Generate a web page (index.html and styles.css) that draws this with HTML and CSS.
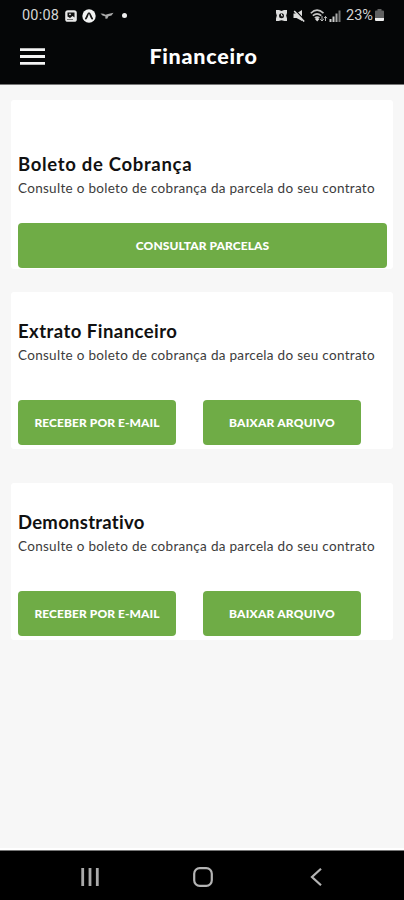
FILE: index.html
```html
<!DOCTYPE html>
<html lang="pt-BR">
<head>
<meta charset="utf-8">
<meta name="viewport" content="width=device-width, initial-scale=1">
<title>Financeiro</title>
<link rel="stylesheet" href="styles.css">
</head>
<body>
<div class="app">
  <header class="top">
    <div class="status">
      <div class="status-left">
        <span class="clock">00:08</span>
        <svg class="ico-image" width="12" height="12" viewBox="0 0 12 12"><rect x=".2" y=".2" width="11.6" height="11.6" rx="2.6" fill="#e8e8e8"/><path d="M2.500 2.500h7v5L7.500 6 5 8 2.500 6.500z" fill="#111"/><path d="M2 9.500h6" stroke="#555" stroke-width=".8"/><circle cx="5" cy="4.300" r=".9" fill="#eee"/></svg>
        <svg class="ico-app" width="14" height="14" viewBox="0 0 14 14"><circle cx="7" cy="7" r="6.700" fill="#f2f2f2"/><path d="M3.800 9.700C5.200 8.200 5.800 4 7 4s1.800 4.200 3.200 5.700" fill="none" stroke="#151515" stroke-width="1.700" stroke-linecap="round"/></svg>
        <svg class="ico-bird" width="14" height="8" viewBox="0 0 14 8"><path d="M.5 1.500l3 .3 2 1 2.500-.8 5.500-1.200-2 2.700-3 .8-1.300 2.500-2-.2.300-2L2.500 3.500z" fill="#aaa"/></svg>
        <span class="dot"></span>
      </div>
      <div class="status-right">
        <svg class="ico-alarm" width="11" height="13" viewBox="0 0 11 13"><path d="M0 1h3l2.500 1L8 1h3v3l-.8 2.500.8 3V12H8.500l-3-.7-3 .7H0V9.500l.8-3L0 4z" fill="#ddd"/><circle cx="5.500" cy="6.700" r="2.500" fill="#151515"/><path d="M5.500 4.800v2h1.400" fill="none" stroke="#ddd"/></svg>
        <svg class="ico-mute" width="12" height="12" viewBox="0 0 12 12"><path d="M.5 3.500h3L9 0v11L3.500 8h-3z" fill="#ddd"/><path d="M2 0l9.500 10" stroke="#050607" stroke-width="1.200"/><path d="M1.200 1l10 10.500" stroke="#ddd" stroke-width="1.600"/></svg>
        <svg class="ico-wifi" width="18" height="14" viewBox="0 0 18 14"><g fill="none" stroke="#c5c5c5" stroke-width="1.600"><path d="M.8 4.200Q7 -1.800 13.500 4.200M2.800 6.700q4.200-3.800 8.500 0M4.800 9q2.300-1.900 4.600 0"/></g><path d="M5 10l2.100-1.200L9.500 10l-2.300 2.400z" fill="#ddd"/><path d="M12 7v5m-1.800-1.800L12 12l1.700-1.800M15.500 12V7.500m-1.500 1.700l1.500-1.700L17 9.200" fill="none" stroke="#bbb"/></svg>
        <svg class="ico-signal" width="12" height="12" viewBox="0 0 12 12"><path d="M.5 9h2v3h-2zM3.500 6.500h2V12h-2z" fill="#ccc"/><path d="M6.500 3.500h2V12h-2z" fill="#aaa"/><path d="M9.500.5h2V12h-2z" fill="#777"/></svg>
        <span class="percent">23%</span>
        <svg class="ico-battery" width="9" height="13" viewBox="0 0 9 13"><path d="M2.500 0h4v1.500H8q1 0 1 1V9H0V2.500q0-1 1-1h1.500z" fill="#606060"/><path d="M0 9h9v2q0 1-1 1H1q-1 0-1-1z" fill="#eee"/></svg>
      </div>
    </div>
    <div class="bar">
      <svg class="menu" width="25" height="17" viewBox="0 0 25 17"><path d="M0 1.700h25M0 8.500h25M0 15.300h25" stroke="#f4f4f4" stroke-width="2.800"/></svg>
      <h1>Financeiro</h1>
    </div>
  </header>
  <main>
    <section class="card card-first">
      <h2>Boleto de Cobrança</h2>
      <p>Consulte o boleto de cobrança da parcela do seu contrato</p>
      <div class="actions"><button class="wide">CONSULTAR PARCELAS</button></div>
    </section>
    <section class="card card-mid">
      <h2 class="h-extrato">Extrato Financeiro</h2>
      <p>Consulte o boleto de cobrança da parcela do seu contrato</p>
      <div class="actions"><button>RECEBER POR E-MAIL</button><button class="baixar">BAIXAR ARQUIVO</button></div>
    </section>
    <section class="card card-last">
      <h2 class="h-demo">Demonstrativo</h2>
      <p>Consulte o boleto de cobrança da parcela do seu contrato</p>
      <div class="actions"><button>RECEBER POR E-MAIL</button><button class="baixar">BAIXAR ARQUIVO</button></div>
    </section>
  </main>
  <nav>
    <svg width="18" height="18" viewBox="0 0 18 18"><path d="M1.700 0v18M9 0v18M16.300 0v18" stroke="#aaa" stroke-width="2.800"/></svg>
    <svg class="home" width="20" height="20" viewBox="0 0 20 20"><rect x="1.200" y="1.200" width="17.600" height="17.600" rx="5.500" fill="none" stroke="#b4b4b4" stroke-width="2.200"/></svg>
    <svg width="12" height="18" viewBox="0 0 12 18"><path d="M11 .8L2 9l9 8.200" fill="none" stroke="#b4b4b4" stroke-width="2.200"/></svg>
  </nav>
</div>
</body>
</html>
```
FILE: styles.css
```css
* { box-sizing: border-box; }
body { margin: 0; font-family: Lato, "Open Sans", sans-serif; background: #f7f7f7; }
.app { width: 404px; height: 900px; display: flex; flex-direction: column; overflow: hidden; }
h1, h2, p { margin: 0; white-space: nowrap; font-variant-ligatures: none; }
svg { display: block; flex: none; }

.top { height: 85px; flex: none; background: #050607; color: #fff; border-bottom: 1px solid #777; }
.status { height: 31px; padding: 0 20px 0 22px; display: flex; justify-content: space-between; align-items: center; font-family: Roboto, sans-serif; font-size: 14.5px; color: #d4d4d4; }
.status-left, .status-right { display: flex; align-items: center; }
.clock { width: 43px; letter-spacing: .2px; }
.ico-app { margin-left: 5px; }
.ico-bird { margin-left: 4px; }
.dot { width: 5px; height: 5px; border-radius: 50%; background: #eee; margin-left: 8px; }
.ico-mute { margin-left: 6px; }
.ico-wifi { margin-left: 5px; }
.ico-signal { margin-left: 1px; }
.percent { width: 28px; margin: 0 1px 0 5px; }
.bar { height: 50px; padding-left: 20px; display: grid; grid-template-columns: 25px 1fr 45px; align-items: center; }
h1 { text-align: center; font-size: 21.5px; line-height: 28px; font-weight: 900; letter-spacing: .75px; padding-left: 3px; }

main { flex: 1; padding: 15px 11px 0; }
.card { height: 157px; background: #fff; border-radius: 3px; padding: 28px 6px 0 7px; }
.card-first { height: 169px; padding-top: 53px; margin-bottom: 23px; }
.card-mid { margin-bottom: 34px; }
h2 { font-size: 18.5px; line-height: 22px; font-weight: 700; letter-spacing: .68px; color: #111; }
.h-extrato { letter-spacing: .46px; }
.h-demo { letter-spacing: .27px; }
p { font-size: 13.5px; line-height: 18px; margin-top: 4px; letter-spacing: .3px; color: #3c3c3c; }
.actions { display: flex; gap: 27px; margin-top: 36px; }
.card-first .actions { margin-top: 26px; }
button { width: 158px; height: 45px; padding: 0; border: 0; border-radius: 4px; background: #6fac46; color: #fff; font: 900 12px/20px Lato, sans-serif; letter-spacing: .07px; white-space: nowrap; }
.baixar { letter-spacing: .22px; }
.wide { width: 370px; }

nav { height: 50px; flex: none; background: #000; border-top: 1px solid #777; box-shadow: 0 -2px 0 #fff; padding: 2px 82px 0 81px; display: flex; align-items: center; justify-content: space-between; }
.home { margin-right: 4px; }
```
